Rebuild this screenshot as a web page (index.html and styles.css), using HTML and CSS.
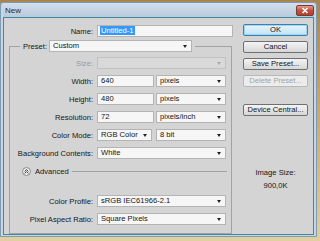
FILE: index.html
```html
<!DOCTYPE html>
<html lang="en">
<head>
    <meta charset="UTF-8">
    <title>New</title>
    <link rel="stylesheet" href="styles.css">
</head>
<body>

<div class="window">

    <div class="titlebar">
        <span class="title">New</span>
        <span class="close">
            <svg width="18" height="11" viewBox="0 0 18 11">
                <path d="M6.5 3 L11.5 8 M11.5 3 L6.5 8" stroke="#fff" stroke-width="1.6"/>
            </svg>
        </span>
    </div>

    <div class="content">

        <div class="leftpane">

            <div class="row namerow">
                <span class="label">Name:</span>
                <div class="field namefield"><span class="selected">Untitled-1</span></div>
            </div>

            <fieldset class="group">
                <legend class="preset">
                    <span class="presetlabel">Preset:</span>
                    <div class="select presetselect">Custom</div>
                </legend>

                <div class="row">
                    <span class="label off">Size:</span>
                    <div class="select wide disabled"></div>
                </div>
                <div class="row">
                    <span class="label">Width:</span>
                    <div class="field num">640</div>
                    <div class="select unit">pixels</div>
                </div>
                <div class="row">
                    <span class="label">Height:</span>
                    <div class="field num">480</div>
                    <div class="select unit">pixels</div>
                </div>
                <div class="row">
                    <span class="label">Resolution:</span>
                    <div class="field num">72</div>
                    <div class="select unit">pixels/inch</div>
                </div>
                <div class="row">
                    <span class="label">Color Mode:</span>
                    <div class="select mode">RGB Color</div>
                    <div class="select unit">8 bit</div>
                </div>
                <div class="row">
                    <span class="label">Background Contents:</span>
                    <div class="select wide">White</div>
                </div>

                <div class="row advanced">
                    <svg class="toggle" width="9" height="9" viewBox="0 0 9 9">
                        <circle cx="4.5" cy="4.5" r="4" fill="#ececec" stroke="#8a8a8a"/>
                        <path d="M2.6 4.4 L4.5 2.6 L6.4 4.4 M2.6 6.4 L4.5 4.6 L6.4 6.4" fill="none" stroke="#333" stroke-width="0.9"/>
                    </svg>
                    <span class="advtext">Advanced</span>
                    <span class="rule"></span>
                </div>

                <div class="row profile">
                    <span class="label">Color Profile:</span>
                    <div class="select wide">sRGB IEC61966-2.1</div>
                </div>
                <div class="row">
                    <span class="label">Pixel Aspect Ratio:</span>
                    <div class="select wide">Square Pixels</div>
                </div>
            </fieldset>

        </div>

        <div class="rightpane">
            <div class="button default">OK</div>
            <div class="button">Cancel</div>
            <div class="button">Save Preset...</div>
            <div class="button disabledbtn">Delete Preset...</div>
            <div class="button central">Device Central...</div>

            <div class="sizetitle">Image Size:</div>
            <div class="sizevalue">900,0K</div>
        </div>

    </div>

</div>

</body>
</html>
```

FILE: styles.css
```css
body {
    margin: 0;
    width: 320px;
    height: 241px;
    overflow: hidden;
    background: linear-gradient(180deg, #a88550 0%, #c9a466 40%, #e2cfa0 100%);
    font-family: "Liberation Sans", Arial, sans-serif;
    font-size: 7.6px;
    color: #141414;
}

.window {
    width: 317px;
    height: 235px;
    margin-top: 2px;
    box-sizing: border-box;
    border: 1px solid #7f9bb2;
    border-radius: 3px 3px 0 0;
    background: #c6d6e6;
    padding: 0 2px 2px 2px;

    /*title bar on top, client area under it*/
    display: flex;
    flex-direction: column;
}

.titlebar {
    height: 14px;
    flex-shrink: 0;
    display: flex;
    align-items: center;
    background: linear-gradient(180deg, #d3dfec, #b9cadb);
}

.title {
    padding-left: 2px;
    font-size: 8px;
    color: #2a2a2a;
}

.close {
    margin-left: auto;
    width: 18px;
    height: 11px;
    border: 1px solid #7a3a32;
    border-radius: 2px;
    box-sizing: border-box;
    background: linear-gradient(180deg, #e09a8c, #c4503f 50%, #b34030);
    display: flex;
}

.close svg {
    margin: -1px;
}

.content {
    flex: 1;
    border: 1px solid #3f8a9e;
    background: #d4d4d4;
    display: flex;
}

.leftpane {
    width: 229px;
}

.row {
    height: 12px;
    margin-bottom: 6px;
    display: flex;
    align-items: center;
}

.namerow {
    margin-top: 7px;
    margin-bottom: 0;
}

.label {
    width: 83px;
    margin-right: 4px;
    text-align: right;
    white-space: nowrap;
}

.namerow .label {
    width: 89px;
}

.label.off {
    color: #9a9a9a;
}

.field,
.select {
    height: 12px;
    box-sizing: border-box;
    border: 1px solid #b4b4b4;
    background: #f6f6f6;
    padding-left: 3px;
    line-height: 10px;
    white-space: nowrap;
    overflow: hidden;
    position: relative;
}

.select::after {
    content: "";
    position: absolute;
    right: 4px;
    top: 4px;
    border-left: 2.5px solid transparent;
    border-right: 2.5px solid transparent;
    border-top: 3px solid #222;
}

.select.disabled {
    background: #d9d9d9;
    border-color: #c2c2c2;
}

.select.disabled::after {
    border-top-color: #a8a8a8;
}

.namefield {
    width: 136px;
    padding-left: 2px;
}

.selected {
    display: inline-block;
    background: #3399ff;
    color: #fff;
    padding: 0 1px;
    line-height: 9px;
}

.wide {
    width: 129px;
}

.num {
    width: 57px;
    margin-right: 2px;
}

.mode {
    width: 55px;
    margin-right: 4px;
}

.unit {
    width: 70px;
}

.group {
    width: 223px;
    box-sizing: border-box;
    min-width: 0;
    margin: 3px 0 0 5px;
    padding: 5px 0 2px 0;
    border: 1px solid #a2a2a2;
}

.preset {
    margin-left: 10px;
    padding: 0 3px;
    height: 12px;
    display: flex;
    align-items: center;
}

.presetlabel {
    width: 24px;
    margin-right: 2px;
}

.presetselect {
    width: 143px;
}

.advanced {
    padding-left: 12px;
    padding-right: 4px;
}

.advtext {
    margin-left: 4px;
}

.rule {
    flex: 1;
    height: 1px;
    margin-left: 3px;
    background: #a2a2a2;
}

.profile {
    margin-top: 18px;
}

.rightpane {
    width: 65px;
    margin-left: 10px;
    padding-top: 6px;
    display: flex;
    flex-direction: column;
    text-align: center;
}

.button {
    height: 12px;
    margin-bottom: 5px;
    box-sizing: border-box;
    border: 1px solid #707070;
    border-radius: 2px;
    background: linear-gradient(180deg, #f3f3f3 0%, #e6e6e6 50%, #d6d6d6 100%);
    line-height: 10px;
    white-space: nowrap;
}

.button.default {
    border-color: #3c7fb1;
    background: linear-gradient(180deg, #e8f5fc 0%, #d4ecf9 50%, #bfe2f5 100%);
    box-shadow: inset 0 0 0 1px #9fd3ef;
}

.disabledbtn {
    color: #a3a3a3;
    border-color: #b8b8b8;
    background: #ececec;
}

.central {
    margin-top: 12px;
}

.sizetitle {
    margin-top: 46px;
    line-height: 11px;
}

.sizevalue {
    margin-top: 2px;
    line-height: 11px;
}
```
